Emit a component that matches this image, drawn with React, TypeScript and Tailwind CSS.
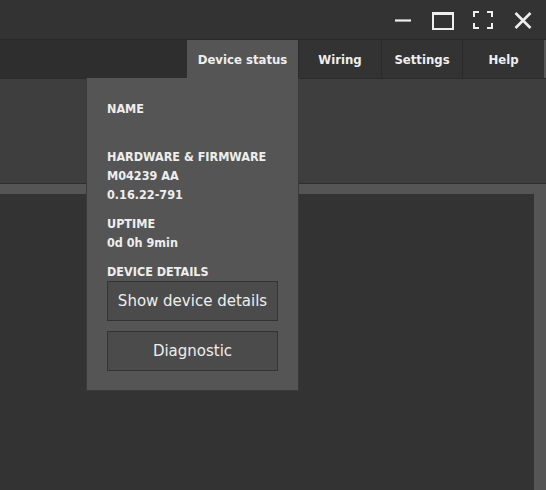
// Fenêtre de l'application avec le menu "Device status" ouvert.
const tabs = ['Device status', 'Wiring', 'Settings', 'Help']
const cond = { fontFamily: '"DejaVu Sans Condensed", "DejaVu Sans", sans-serif', fontStretch: 'condensed' }
const plain = { fontFamily: '"DejaVu Sans", sans-serif', fontStretch: 'normal' }

function WindowControls() {
  return (
    <div className="flex items-center h-full pr-[13px] text-[#eeeeee]">
      <svg width="20" height="38" viewBox="0 0 20 38">
        <path d="M2 19.5h16" stroke="currentColor" strokeWidth="2.2" />
      </svg>
      <svg width="24" height="38" viewBox="0 0 24 38" className="ml-[18px]">
        <rect x="2" y="12" width="20" height="16" fill="none" stroke="currentColor" strokeWidth="2" />
        <path d="M2 12.5h20" stroke="currentColor" strokeWidth="3" />
      </svg>
      <svg width="22" height="38" viewBox="0 0 22 38" className="ml-[17px]">
        <path d="M2 16v-5h5M15 11h5v5M20 22v5h-5M7 27h-5v-5" fill="none" stroke="currentColor" strokeWidth="2" />
      </svg>
      <svg width="20" height="38" viewBox="0 0 20 38" className="ml-[19px]">
        <path d="M2.5 12l15 15M17.5 12l-15 15" stroke="currentColor" strokeWidth="2.6" />
      </svg>
    </div>
  )
}

export default function App() {
  return (
    <div
      className="relative w-[546px] h-[490px] overflow-hidden bg-[#333333] text-[#eeeeee] flex flex-col"
      style={{ fontFamily: '"DejaVu Sans", Verdana, sans-serif' }}
    >
      {/* Barre de titre */}
      <div className="h-[39px] flex justify-end bg-[#333333]">
        <WindowControls />
      </div>

      {/* Onglets */}
      <div className="h-[40px] flex bg-[#2e2e2e] border-t border-[#292929] border-b border-b-[#2a2a2a]">
        <div className="flex-1" />
        {tabs.map((t, i) => (
          <div
            key={t}
            style={cond}
            className={
              i === 0
                ? 'w-[111px] flex items-center justify-center pt-[2px] text-[13px] font-bold bg-[#555555]'
                : 'flex items-center justify-center pt-[2px] text-[13px] font-bold bg-[#333333] border-l border-[#2a2a2a] ' +
                  (i === 1 ? 'w-[83px]' : i === 2 ? 'w-[81px]' : 'w-[82px]')
            }
          >
            {t}
          </div>
        ))}
        <div className="w-[2px] bg-[#555555]" />
      </div>

      {/* Barre d'outils */}
      <div className="h-[105px] bg-[#3e3e3e] border-b border-[#2f2f2f]" />

      {/* Zone de contenu */}
      <div className="flex-1 bg-[#555555] pt-[10px] pr-[12px] flex">
        <div className="flex-1 bg-[#333333]" />
      </div>

      {/* Menu déroulant */}
      <div
        style={cond}
        className="absolute left-[86px] top-[78px] w-[213px] h-[313px] bg-[#555555] border border-[#3a3a3a] border-t-0 pl-[20px] pr-[20px] pt-[21px] text-[12.5px] font-bold leading-[19px]"
      >
        <div>NAME</div>
        <div className="mt-[29px]">HARDWARE &amp; FIRMWARE</div>
        <div>M04239 AA</div>
        <div>0.16.22-791</div>
        <div className="mt-[10px]">UPTIME</div>
        <div>0d 0h 9min</div>
        <div className="mt-[10px]">DEVICE DETAILS</div>
        <button
          style={plain}
          className="w-[171px] h-[40px] bg-[#4b4b4b] border border-[#333333] text-[15px] font-normal text-[#eeeeee]"
        >
          Show device details
        </button>
        <button
          style={plain}
          className="mt-[10px] w-[171px] h-[40px] bg-[#4b4b4b] border border-[#333333] text-[15px] font-normal text-[#eeeeee]"
        >
          Diagnostic
        </button>
      </div>
    </div>
  )
}
